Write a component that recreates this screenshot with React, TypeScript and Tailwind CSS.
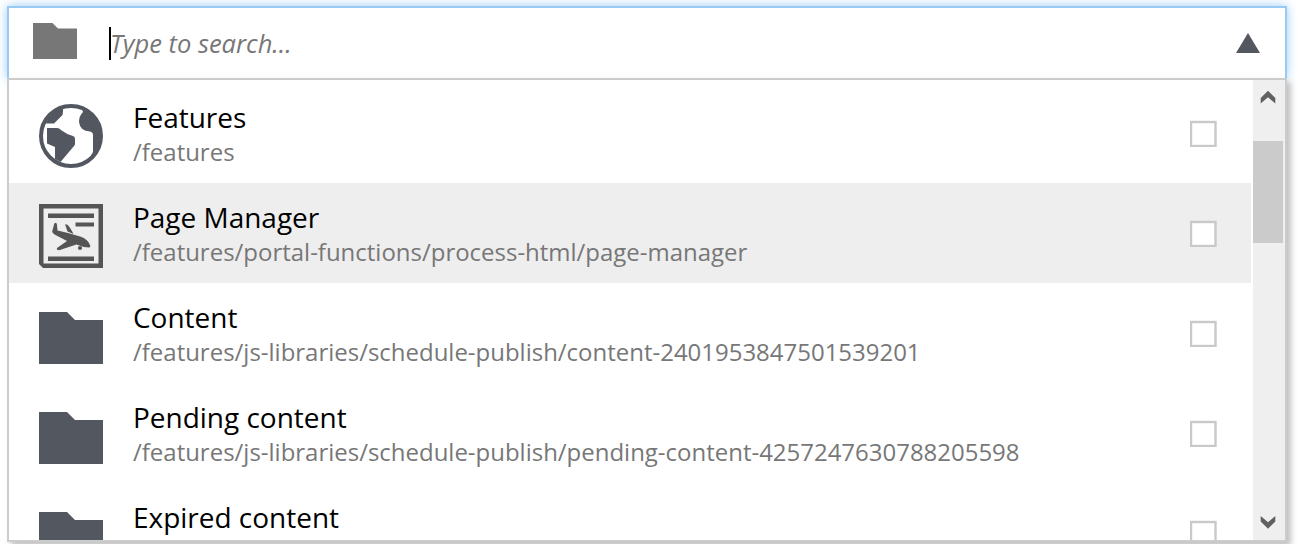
import React from 'react';

type IconKind = 'globe' | 'page' | 'folder';

interface Item {
  title: string;
  path?: string;
  icon: IconKind;
}

const items: Item[] = [
  { title: 'Features', path: '/features', icon: 'globe' },
  { title: 'Page Manager', path: '/features/portal-functions/process-html/page-manager', icon: 'page' },
  { title: 'Content', path: '/features/js-libraries/schedule-publish/content-2401953847501539201', icon: 'folder' },
  { title: 'Pending content', path: '/features/js-libraries/schedule-publish/pending-content-4257247630788205598', icon: 'folder' },
  { title: 'Expired content', icon: 'folder' },
];

function ItemIcon({ kind }: { kind: IconKind }) {
  if (kind === 'globe') {
    return (
      <svg viewBox="0 0 64 64" className="size-16 shrink-0 text-[#535860]" fill="currentColor">
        <circle cx="32" cy="32" r="30" fill="#fff" stroke="currentColor" strokeWidth="4" />
        <path d="M24 4V8L23.5 11L15 19.5H6.5A28 28 0 0 1 24 4Z" />
        <path d="M8 24H18Q20.500 24 22 26Q27 30 34 32Q36 32.500 36 35V40Q36 41 35 42L21.500 58L16 55V43L8 39.500V25Z" />
        <path d="M43 4L44 8Q40 12 40 18Q41 27 51 27.500Q54 28 54 31V48L49 57A30 30 0 0 0 62 32A30 30 0 0 0 43 4Z" />
      </svg>
    );
  }
  if (kind === 'page') {
    return (
      <svg viewBox="0 0 64 64" className="size-16 shrink-0 text-[#555]" fill="currentColor">
        <path fillRule="evenodd" d="M0 0H64V64H4L0 60ZM4.500 4.500V59.500H59.500V4.500Z" />
        <path d="M9 9.500H55V14H9ZM36.500 18.500H55V22.500H36.500ZM9 52.500H55V57H9Z" />
        <path d="M13.200 27.500L15.300 19.500L16.500 18.700L17.800 19.500L18.500 26.500L29 29L42 32.800Q49 35.500 51 41Q51.800 43.500 50 43.500Q45 43.500 39 41L37.500 40.500L20 46.300L17.800 45.500L18 44L28 37L16 30.800Q13 29 13.200 27.500Z" />
        <path d="M26 20.300L28.500 20.700Q31 23 34.500 30L28.500 27.500Z" />
        <circle cx="41" cy="44" r="2.100" />
      </svg>
    );
  }
  return (
    <svg viewBox="0 0 64 64" className="size-16 shrink-0 text-[#535860]" fill="currentColor">
      <path d="M0 8H28L36 16H64V60H0Z" />
    </svg>
  );
}

function Row({ item, active }: { item: Item; active: boolean }) {
  return (
    <li className={`flex h-[100px] shrink-0 items-start pl-[30px] pr-[34px] ${active ? 'bg-[#eee]' : 'bg-white'}`}>
      <div className="pt-[21px]">
        <ItemIcon kind={item.icon} />
      </div>
      <div className="min-w-0 grow pl-[30px] pt-[16px] whitespace-nowrap">
        <div className="text-[27.97px] leading-[37px] text-black">{item.title}</div>
        {item.path && <div className="text-[23.98px] leading-[32px] text-[#777]">{item.path}</div>}
      </div>
      <svg viewBox="0 0 27 27" className="mt-[37px] size-[27px] shrink-0">
        <rect x="1" y="2" width="24.500" height="24" fill="#fff" stroke="#c9c9c9" strokeWidth="2.400" />
      </svg>
    </li>
  );
}

function Scrollbar() {
  return (
    <div className="flex w-8 shrink-0 flex-col bg-[#efefef] pr-0.5">
      <div className="flex h-[61px] justify-center pt-[10px]">
        <svg viewBox="0 0 16 14" className="h-[14px] w-4">
          <path d="M0.700 8L8 0.800L15.300 8V13.500L8 7.300L0.700 13.500Z" fill="#606060" />
        </svg>
      </div>
      <div className="h-[102px] bg-[#cbcbcb]" />
      <div className="flex grow items-end justify-center pb-[10px]">
        <svg viewBox="0 0 16 14" className="h-[14px] w-4">
          <path d="M0.700 5.500L8 12.700L15.300 5.500V0L8 6.200L0.700 0Z" fill="#606060" />
        </svg>
      </div>
    </div>
  );
}

export default function App() {
  return (
    <div className="h-[557px] w-[1300px] overflow-hidden bg-white font-['Open_Sans',sans-serif]">
      <div className="h-[544px] overflow-hidden pl-[7px] pt-[6px]">
        <div className="w-[1280px]">
          <div className="flex h-[72px] items-center border-2 border-b-0 border-[#99caf3] bg-white pl-6 pr-[25px] shadow-[0_0_10px_#99caf3]">
            <svg viewBox="0 0 44 36" className="mb-1 h-9 w-11 shrink-0" fill="#777">
              <path d="M0 0H19.500L25 5.500H44V36H0Z" />
            </svg>
            <div className="ml-8 h-[33px] w-0.5 bg-black" />
            <span className="-mt-px -ml-px grow text-[25.5px] leading-[32px] text-[#777] italic">Type to search...</span>
            <svg viewBox="0 0 24 20" className="h-5 w-6" fill="#535860">
              <path d="M12 0L24 20H0Z" />
            </svg>
          </div>
          <div className="relative flex h-[464px] border-2 border-[#ccc] bg-white shadow-[4px_4px_6px_rgba(0,0,0,0.25)]">
            <ul className="flex w-[1242px] shrink-0 flex-col overflow-hidden pt-[3px]">
              {items.map((item, index) => (
                <Row key={item.title} item={item} active={index === 1} />
              ))}
            </ul>
            <div className="w-0.5 shrink-0" />
            <Scrollbar />
          </div>
        </div>
      </div>
    </div>
  );
}
